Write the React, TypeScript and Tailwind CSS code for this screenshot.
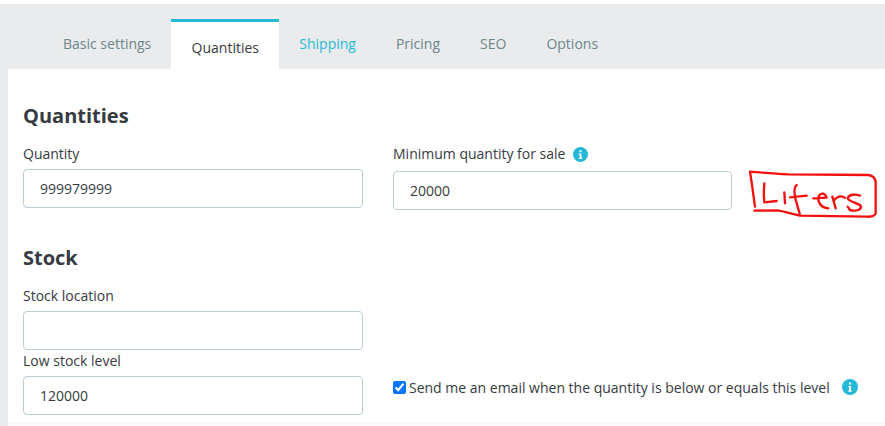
const TABS = ["Basic settings", "Quantities", "Shipping", "Pricing", "SEO", "Options"];

const InfoIcon = ({ className }: { className: string }) => (
    <svg viewBox="0 0 16 16" className={className}>
        <circle cx="8" cy="8" r="8" fill="#25b9d7" />
        <rect x="7" y="3.5" width="2" height="2" fill="#fff" />
        <rect x="7" y="7" width="2" height="5.5" fill="#fff" />
        <rect x="6" y="7" width="2" height="1" fill="#fff" />
        <rect x="6" y="11.5" width="4" height="1" fill="#fff" />
    </svg>
);

const Field = ({ value, className }: { value: string; className: string }) => (
    <div className={`flex h-[39px] w-[340px] items-center rounded-[4px] border border-[#bbcdd2] bg-white pl-4 text-[14px] text-[#363a41] ${className}`}>
        {value}
    </div>
);

// hand drawn note on top of the screenshot
const Scribble = () => (
    <svg
        viewBox="0 0 420 180"
        fill="none"
        stroke="#f40f0f"
        strokeWidth="7"
        strokeLinecap="round"
        strokeLinejoin="round"
        className="absolute left-[745px] top-[165px] h-[60px] w-[140px]"
    >
        <path d="M15 20 C20 50 25 90 30 125 M15 20 C40 22 80 26 130 28 L370 30 C385 32 392 40 392 55 L392 145 C390 153 382 156 365 155 L165 152 C140 148 120 138 95 136 L28 137" />
        <path d="M58 55 C56 80 56 95 58 112 L95 108" />
        <path d="M118 82 L120 115" />
        <path d="M155 60 C147 65 147 80 151 100 L165 150 M135 97 L185 92" />
        <path d="M205 100 L245 98 C240 84 228 82 222 92 C216 108 225 128 250 130" />
        <path d="M262 95 L272 130 M268 105 C275 95 288 90 300 98" />
        <path d="M345 92 C330 86 312 88 308 100 C312 110 335 112 347 122 C350 134 335 140 315 135 L308 125" />
    </svg>
);

export default function App() {
    return (
        <div className="relative h-[426px] w-[885px] overflow-hidden bg-white pt-1 font-['Open_Sans',sans-serif] text-[14px] text-[#363a41]">
            <div className="h-full bg-[#eaebec] pl-2">
                <nav className="flex h-[65px] items-end pl-[35px]">
                    {TABS.map((tab) =>
                        tab === "Quantities" ? (
                            <div
                                key={tab}
                                className="flex h-[50px] w-[108px] items-center justify-center border-t-[3px] border-[#25b9d7] bg-white pt-[3px] text-[#363a41]"
                            >
                                {tab}
                            </div>
                        ) : (
                            <div
                                key={tab}
                                className={`flex h-[50px] items-center px-5 pb-[2px] ${tab === "Shipping" ? "text-[#25b9d7]" : "text-[#6c868e]"}`}
                            >
                                {tab}
                            </div>
                        ),
                    )}
                </nav>
                <main className="h-[357px] bg-white pl-[15px] pt-[34px]">
                    <h2 className="text-[20px] font-bold leading-[26px] text-[#363a41]">Quantities</h2>
                    <div className="mt-[15px] flex gap-[30px]">
                        <div className="w-[340px]">
                            <div className="h-[20px] leading-[20px]">Quantity</div>
                            <Field value="999979999" className="mt-[5px]" />
                        </div>
                        <div className="w-[339px]">
                            <div className="flex h-[20px] items-center gap-2 leading-[20px]">
                                Minimum quantity for sale
                                <InfoIcon className="size-[15px]" />
                            </div>
                            <Field value="20000" className="mt-[7px] !w-[339px]" />
                        </div>
                    </div>
                    <h2 className="mt-[35px] text-[20px] font-bold leading-[26px] text-[#363a41]">Stock</h2>
                    <div className="mt-[15px] h-[20px] leading-[20px]">Stock location</div>
                    <Field value="" className="mt-[5px]" />
                    <div className="mt-[1px] h-[20px] leading-[20px]">Low stock level</div>
                    <div className="mt-[5px] flex gap-[30px]">
                        <Field value="120000" className="" />
                        <label className="flex h-[20px] items-center gap-[2px] pt-[2px] text-[14px]">
                            <input type="checkbox" defaultChecked className="m-0 mr-[1px] size-[13px] accent-[#0075ff]" />
                            <span>Send me an email when the quantity is below or equals this level</span>
                            <InfoIcon className="ml-[10px] size-[16px]" />
                        </label>
                    </div>
                    <div className="ml-[-15px] mt-[6px] h-[6px] bg-[#fafafa]" />
                </main>
            </div>
            <Scribble />
        </div>
    );
}
